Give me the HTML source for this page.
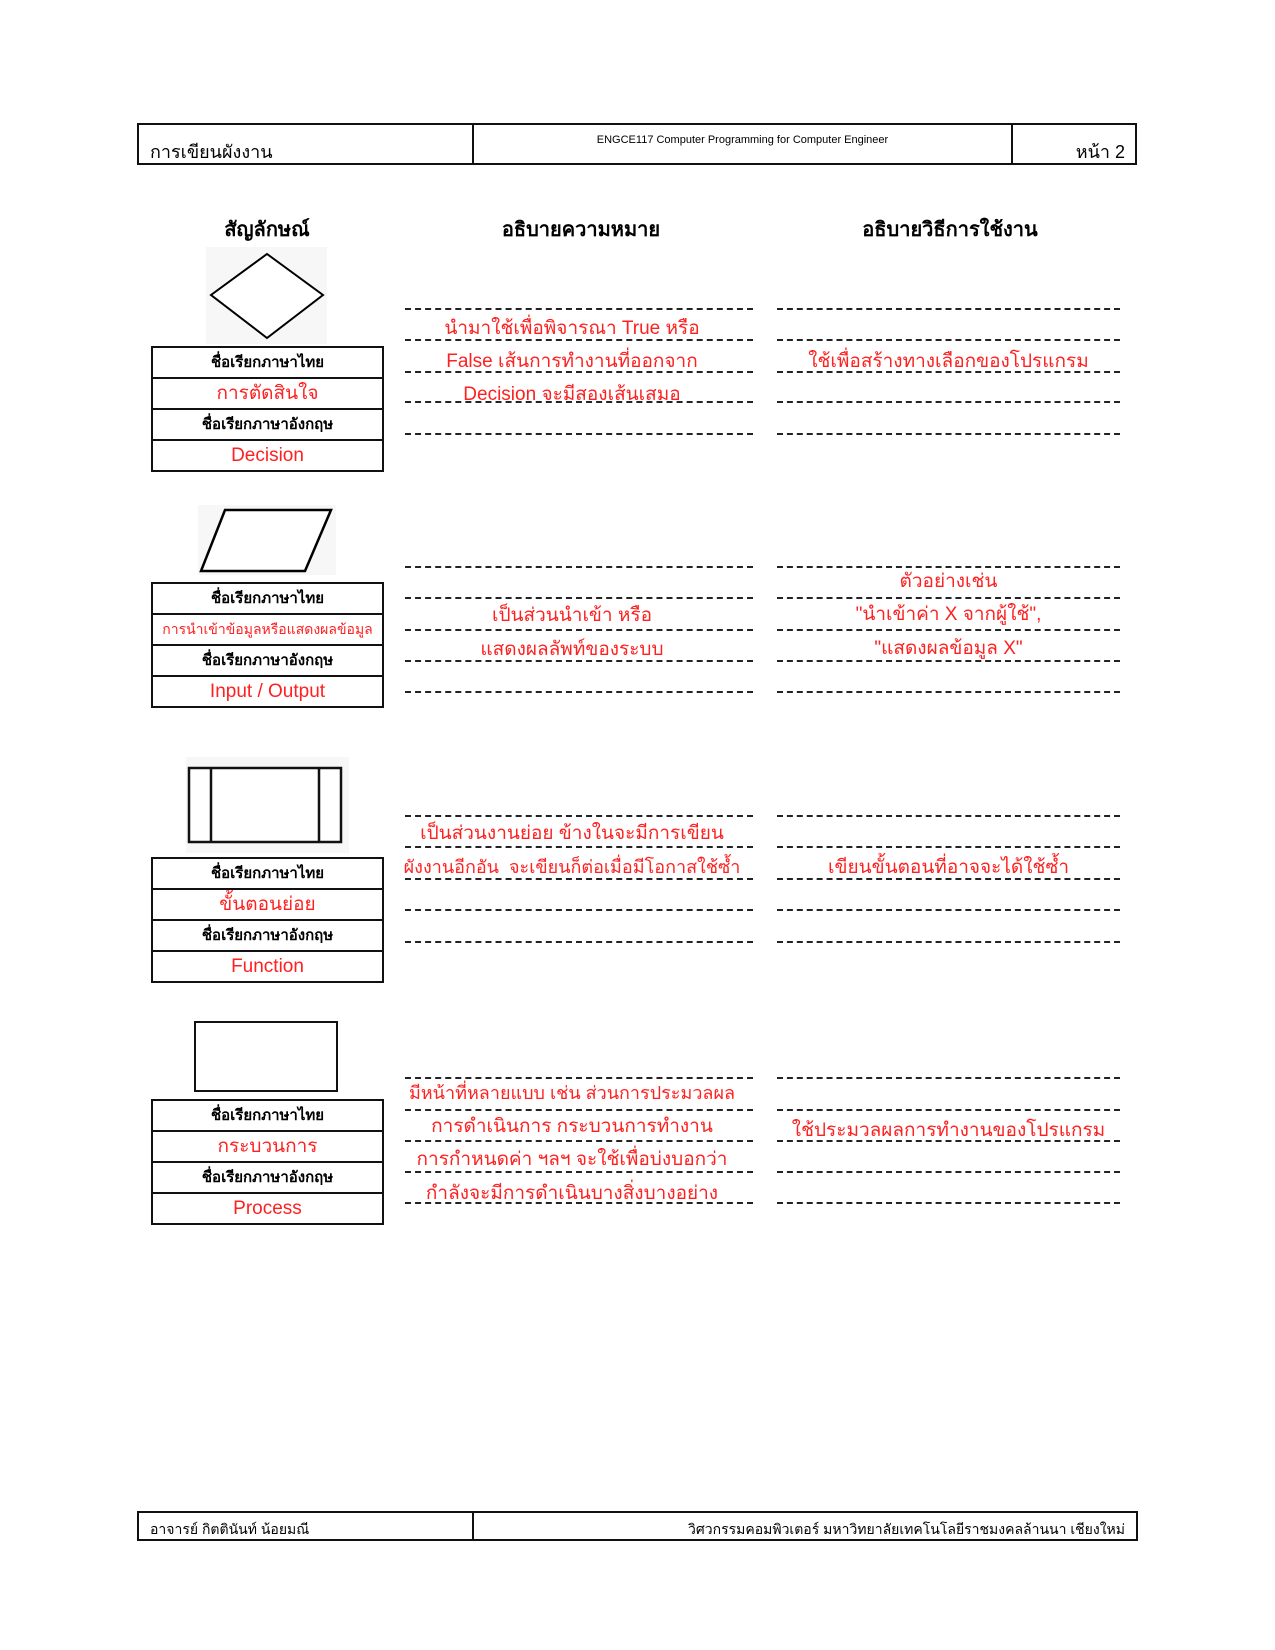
<!DOCTYPE html>
<html><head><meta charset="utf-8"><style>
body{margin:0;background:#fff;}
#p{position:relative;width:1275px;height:1650px;overflow:hidden;font-family:"Liberation Sans",sans-serif;color:#000;}
.a{position:absolute;}
.t{position:absolute;white-space:nowrap;text-align:center;height:28px;line-height:28px;}
.r{color:#ff2020;font-size:19px;}
.d{position:absolute;height:0;border-top:2px dashed #222;}
.tb{position:absolute;left:151px;width:229px;border:2px solid #111;}
.tb div{height:29px;line-height:29px;text-align:center;border-bottom:2px solid #111;white-space:nowrap;overflow:hidden;}
.tb div:last-child{border-bottom:none;}
.lb{font-weight:bold;font-size:15px;}
.h{font-weight:bold;font-size:20px;}
</style></head><body><div id="p">
<!-- header -->
<div class="a" style="left:137px;top:123px;width:996px;height:38px;border:2px solid #111;"></div>
<div class="a" style="left:472px;top:123px;width:2px;height:40px;background:#111;"></div>
<div class="a" style="left:1011px;top:123px;width:2px;height:40px;background:#111;"></div>
<div class="t" style="left:150px;top:138px;font-size:18px;text-align:left;">การเขียนผังงาน</div>
<div class="t" style="left:474px;top:132px;width:537px;font-size:11px;height:16px;line-height:16px;">ENGCE117 Computer Programming for Computer Engineer</div>
<div class="t" style="left:1013px;top:138px;width:112px;font-size:18px;text-align:right;">หน้า 2</div>
<!-- headings -->
<div class="t h" style="left:167px;top:216px;width:200px;">สัญลักษณ์</div>
<div class="t h" style="left:431px;top:216px;width:300px;">อธิบายความหมาย</div>
<div class="t h" style="left:800px;top:216px;width:300px;">อธิบายวิธีการใช้งาน</div>

<!-- section 1 -->
<svg class="a" style="left:206px;top:247px" width="121" height="97"><rect width="121" height="97" fill="#f7f7f7"/><polygon points="61,7 117,48 61,91 5,48" fill="#fff" stroke="#000" stroke-width="2"/></svg>
<div class="tb" style="top:346px;"><div class="lb">ชื่อเรียกภาษาไทย</div><div class="r">การตัดสินใจ</div><div class="lb">ชื่อเรียกภาษาอังกฤษ</div><div class="r">Decision</div></div>
<div class="d" style="left:405px;width:348px;top:308px"></div><div class="d" style="left:405px;width:348px;top:339px"></div><div class="d" style="left:405px;width:348px;top:371px"></div><div class="d" style="left:405px;width:348px;top:401px"></div><div class="d" style="left:405px;width:348px;top:433px"></div>
<div class="d" style="left:777px;width:343px;top:308px"></div><div class="d" style="left:777px;width:343px;top:339px"></div><div class="d" style="left:777px;width:343px;top:371px"></div><div class="d" style="left:777px;width:343px;top:401px"></div><div class="d" style="left:777px;width:343px;top:433px"></div>
<div class="t r" style="left:398px;width:348px;top:315px;">นำมาใช้เพื่อพิจารณา True หรือ</div>
<div class="t r" style="left:398px;width:348px;top:348px;">False เส้นการทำงานที่ออกจาก</div>
<div class="t r" style="left:398px;width:348px;top:381px;">Decision จะมีสองเส้นเสมอ</div>
<div class="t r" style="left:777px;width:343px;top:348px;">ใช้เพื่อสร้างทางเลือกของโปรแกรม</div>

<!-- section 2 -->
<svg class="a" style="left:198px;top:505px" width="138" height="70"><rect width="138" height="70" fill="#f7f7f7"/><polygon points="27,5 133,5 107,66 3,66" fill="#fff" stroke="#000" stroke-width="2.5"/></svg>
<div class="tb" style="top:582px;"><div class="lb">ชื่อเรียกภาษาไทย</div><div class="r" style="font-size:14px">การนำเข้าข้อมูลหรือแสดงผลข้อมูล</div><div class="lb">ชื่อเรียกภาษาอังกฤษ</div><div class="r">Input / Output</div></div>
<div class="d" style="left:405px;width:348px;top:566px"></div><div class="d" style="left:405px;width:348px;top:597px"></div><div class="d" style="left:405px;width:348px;top:629px"></div><div class="d" style="left:405px;width:348px;top:660px"></div><div class="d" style="left:405px;width:348px;top:691px"></div>
<div class="d" style="left:777px;width:343px;top:566px"></div><div class="d" style="left:777px;width:343px;top:597px"></div><div class="d" style="left:777px;width:343px;top:629px"></div><div class="d" style="left:777px;width:343px;top:660px"></div><div class="d" style="left:777px;width:343px;top:691px"></div>
<div class="t r" style="left:398px;width:348px;top:602px;">เป็นส่วนนำเข้า หรือ</div>
<div class="t r" style="left:398px;width:348px;top:636px;">แสดงผลลัพท์ของระบบ</div>
<div class="t r" style="left:777px;width:343px;top:568px;">ตัวอย่างเช่น</div>
<div class="t r" style="left:777px;width:343px;top:601px;">"นำเข้าค่า X จากผู้ใช้",</div>
<div class="t r" style="left:777px;width:343px;top:635px;">"แสดงผลข้อมูล X"</div>

<!-- section 3 -->
<svg class="a" style="left:186px;top:757px" width="163" height="96"><rect width="163" height="96" fill="#f7f7f7"/><rect x="3" y="11" width="152" height="74" fill="#fff" stroke="#111" stroke-width="2.5"/><line x1="25" y1="11" x2="25" y2="85" stroke="#111" stroke-width="2.5"/><line x1="133" y1="11" x2="133" y2="85" stroke="#111" stroke-width="2.5"/></svg>
<div class="tb" style="top:857px;"><div class="lb">ชื่อเรียกภาษาไทย</div><div class="r">ขั้นตอนย่อย</div><div class="lb">ชื่อเรียกภาษาอังกฤษ</div><div class="r">Function</div></div>
<div class="d" style="left:405px;width:348px;top:815px"></div><div class="d" style="left:405px;width:348px;top:846px"></div><div class="d" style="left:405px;width:348px;top:878px"></div><div class="d" style="left:405px;width:348px;top:909px"></div><div class="d" style="left:405px;width:348px;top:941px"></div>
<div class="d" style="left:777px;width:343px;top:815px"></div><div class="d" style="left:777px;width:343px;top:846px"></div><div class="d" style="left:777px;width:343px;top:878px"></div><div class="d" style="left:777px;width:343px;top:909px"></div><div class="d" style="left:777px;width:343px;top:941px"></div>
<div class="t r" style="left:398px;width:348px;top:820px;">เป็นส่วนงานย่อย ข้างในจะมีการเขียน</div>
<div class="t r" style="left:398px;width:348px;top:853px;font-size:18px;">ผังงานอีกอัน&nbsp; จะเขียนก็ต่อเมื่อมีโอกาสใช้ซ้ำ</div>
<div class="t r" style="left:777px;width:343px;top:854px;">เขียนขั้นตอนที่อาจจะได้ใช้ซ้ำ</div>

<!-- section 4 -->
<div class="a" style="left:194px;top:1021px;width:140px;height:67px;border:2.5px solid #111;"></div>
<div class="tb" style="top:1099px;"><div class="lb">ชื่อเรียกภาษาไทย</div><div class="r">กระบวนการ</div><div class="lb">ชื่อเรียกภาษาอังกฤษ</div><div class="r">Process</div></div>
<div class="d" style="left:405px;width:348px;top:1077px"></div><div class="d" style="left:405px;width:348px;top:1109px"></div><div class="d" style="left:405px;width:348px;top:1140px"></div><div class="d" style="left:405px;width:348px;top:1171px"></div><div class="d" style="left:405px;width:348px;top:1202px"></div>
<div class="d" style="left:777px;width:343px;top:1077px"></div><div class="d" style="left:777px;width:343px;top:1109px"></div><div class="d" style="left:777px;width:343px;top:1140px"></div><div class="d" style="left:777px;width:343px;top:1171px"></div><div class="d" style="left:777px;width:343px;top:1202px"></div>
<div class="t r" style="left:398px;width:348px;top:1079px;font-size:18px;">มีหน้าที่หลายแบบ เช่น ส่วนการประมวลผล</div>
<div class="t r" style="left:398px;width:348px;top:1113px;">การดำเนินการ กระบวนการทำงาน</div>
<div class="t r" style="left:398px;width:348px;top:1146px;">การกำหนดค่า ฯลฯ จะใช้เพื่อบ่งบอกว่า</div>
<div class="t r" style="left:398px;width:348px;top:1180px;">กำลังจะมีการดำเนินบางสิ่งบางอย่าง</div>
<div class="t r" style="left:777px;width:343px;top:1117px;">ใช้ประมวลผลการทำงานของโปรแกรม</div>

<!-- footer -->
<div class="a" style="left:137px;top:1511px;width:997px;height:26px;border:2px solid #111;"></div>
<div class="a" style="left:472px;top:1511px;width:2px;height:28px;background:#111;"></div>
<div class="t" style="left:150px;top:1517px;font-size:14px;text-align:left;height:24px;line-height:24px;">อาจารย์ กิตตินันท์ น้อยมณี</div>
<div class="t" style="left:480px;top:1517px;width:645px;font-size:14px;text-align:right;height:24px;line-height:24px;">วิศวกรรมคอมพิวเตอร์ มหาวิทยาลัยเทคโนโลยีราชมงคลล้านนา เชียงใหม่</div>
</div></body></html>
